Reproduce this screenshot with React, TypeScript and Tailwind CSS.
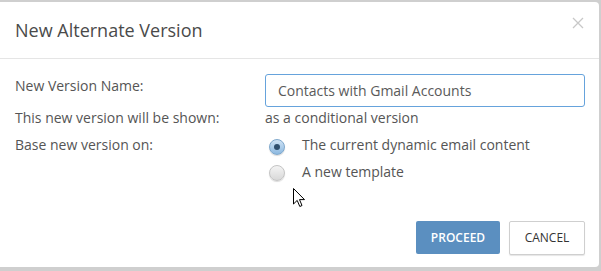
import React from 'react'

function Radio({ checked }: { checked?: boolean }) {
  return (
    <span
      className={
        'flex h-[16px] w-[16px] items-center justify-center rounded-full border shadow-[0_1px_1px_rgba(0,0,0,0.15)] ' +
        (checked
          ? 'border-[#7fa8cc] bg-gradient-to-b from-[#cfe3f5] to-[#8db9e0]'
          : 'border-[#c4c4c4] bg-gradient-to-b from-[#f4f4f4] to-[#d8d8d8]')
      }
    >
      {checked && <span className="h-[6px] w-[6px] rounded-full bg-[#2f4f6e]" />}
    </span>
  )
}

export default function App() {
  return (
    <div
      className="relative h-[271px] w-[601px] overflow-hidden bg-[#cfcfcf] pt-[2px]"
      style={{ fontFamily: '"Open Sans", "Liberation Sans", sans-serif' }}
    >
      <div className="flex h-[265px] w-[599px] flex-col rounded-r-[4px] bg-white text-[#555]">
        <div className="flex h-[57px] items-center justify-between border-b border-[#e5e5e5] pl-[15px] pr-[14px]">
          <h1 className="text-[18px] font-normal text-[#4a4a4a]">New Alternate Version</h1>
          <svg width="12" height="12" viewBox="0 0 12 12" className="-mt-[14px] mr-[1px]">
            <path d="M1 1 L11 11 M11 1 L1 11" stroke="#c8c8c8" strokeWidth="1.3" />
          </svg>
        </div>

        <div className="grid grid-cols-[250px_320px] pl-[15px] pt-[15px] text-[14px] leading-[20px]">
          <div className="pt-[2px]">New Version Name:</div>
          <div className="flex h-[33px] items-center rounded-[3px] border border-[#66a3dc] px-[12px] text-[#5a5a5a]">
            Contacts with Gmail Accounts
          </div>

          <div className="pt-[1px]">This new version will be shown:</div>
          <div className="pt-[1px]">as a conditional version</div>

          <div className="mt-[7px]">Base new version on:</div>
          <div className="mt-[7px] flex flex-col gap-[7px] pl-[4px]">
            <label className="flex items-center gap-[17px]">
              <span className="mt-[3px]"><Radio checked /></span>
              <span>The current dynamic email content</span>
            </label>
            <label className="flex items-center gap-[17px]">
              <span className="mt-[2px]"><Radio /></span>
              <span>A new template</span>
            </label>
          </div>
        </div>

        <div className="mt-auto mb-[12px] flex justify-end gap-[9px] pr-[14px]">
          <button className="h-[33px] w-[84px] rounded-[2px] bg-[#5b8fc0] text-[12px] font-semibold text-white">
            PROCEED
          </button>
          <button className="h-[34px] w-[76px] rounded-[2px] border border-[#cfcfcf] bg-white text-[12px] text-[#333] shadow-[0_1px_1px_rgba(0,0,0,0.1)]">
            CANCEL
          </button>
        </div>
      </div>

      <svg
        width="13"
        height="20"
        viewBox="0 0 13 20"
        className="absolute left-[293px] top-[188px]"
      >
        <path
          d="M0.5 0.5 L0.5 16 L4.2 12.4 L6.8 18.5 L9 17.5 L6.5 11.6 L11.5 11.6 Z"
          fill="white"
          stroke="black"
          strokeWidth="1"
          strokeLinejoin="miter"
        />
      </svg>
    </div>
  )
}
